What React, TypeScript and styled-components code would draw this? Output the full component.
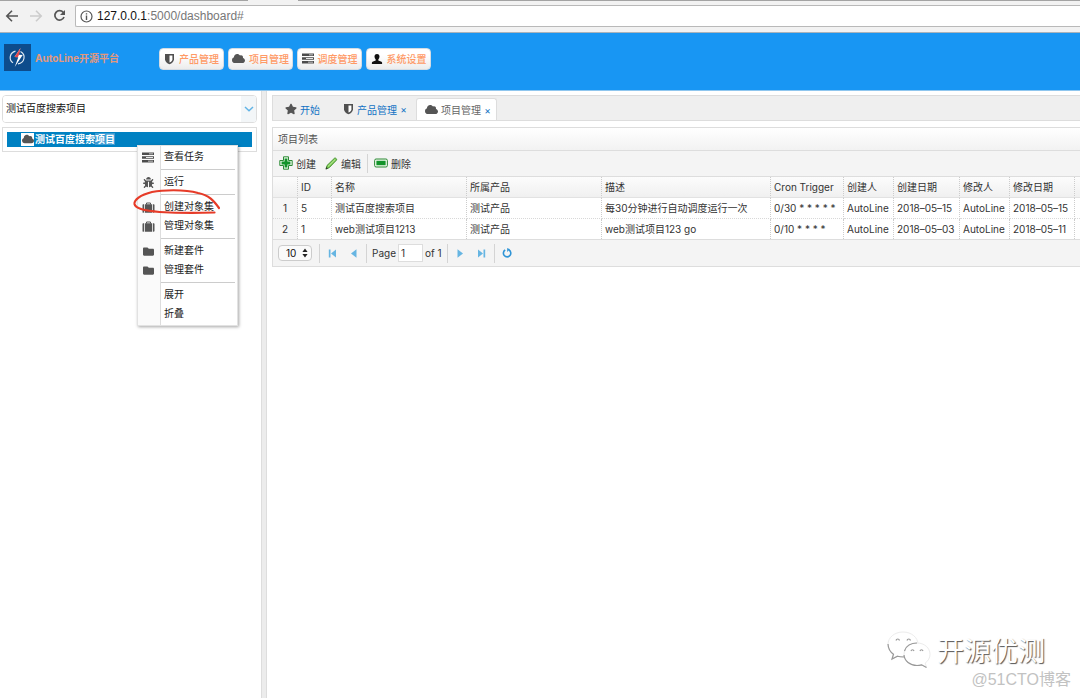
import React from 'react';
import styled, { createGlobalStyle, css } from 'styled-components';
import { FaCloud, FaStar, FaBug, FaFolder } from 'react-icons/fa';

const Global = createGlobalStyle`
  * { box-sizing: border-box; }
  body { margin: 0; background: #fff; }
  body, button, input, select {
    font-family: Inter, "Noto Sans CJK SC", sans-serif;
    font-size: 10px;
    color: #333;
  }
  button { margin: 0; padding: 0; border: 0; background: none; cursor: pointer; }
`;

const Page = styled.div`
  display: flex;
  flex-direction: column;
  min-height: 100vh;
  position: relative;
  overflow: hidden;
`;

/* ---------- browser bar ---------- */
const BrowserBar = styled.div`
  display: flex;
  align-items: center;
  height: 33px;
  flex: none;
  background: #f2f2f2;
  border-bottom: 1px solid #a9b3bb;
  position: relative;
  &::before {
    content: '';
    position: absolute;
    top: 0;
    left: 0;
    width: 248px;
    height: 1px;
    background: #a3a3a3;
  }
  &::after {
    content: '';
    position: absolute;
    top: 0;
    left: 298px;
    right: 0;
    height: 1px;
    background: #a3a3a3;
  }
`;
const NavButtons = styled.div`
  display: flex;
  gap: 8px;
  width: 75px;
  padding-left: 4px;
  flex: none;
  button { display: flex; }
`;
const Address = styled.div`
  display: flex;
  align-items: center;
  gap: 4px;
  flex: 1;
  height: 22px;
  padding-left: 4px;
  background: #fff;
  border: 1px solid #b9b9b9;
  border-right: 0;
  border-radius: 2px 0 0 2px;
  font-family: "Liberation Sans", sans-serif;
  font-size: 12px;
  color: #777;
  b { font-weight: 400; color: #111; }
`;

/* ---------- header ---------- */
const Header = styled.header`
  display: flex;
  align-items: center;
  height: 58px;
  flex: none;
  padding: 0 4px 8px;
  background: #1896f3;
  border-bottom: 1px solid #8fc6ee;
`;
const Brand = styled.div`
  display: flex;
  align-items: center;
  gap: 4px;
  width: 155px;
  flex: none;
  font-weight: 700;
  color: #e3987c;
`;
const Nav = styled.nav`
  display: flex;
  gap: 4px;
  padding-top: 2px;
`;
const NavButton = styled.button`
  display: flex;
  align-items: center;
  justify-content: center;
  gap: 4px;
  width: 65px;
  height: 22px;
  color: #ff9a66;
  font-weight: 500;
  border: 1px solid #d4dce4;
  border-radius: 4px;
  background: linear-gradient(#fff 30%, #ececec);
  white-space: nowrap;
`;

/* ---------- body ---------- */
const Body = styled.div`
  display: flex;
  flex: 1;
`;
const Side = styled.aside`
  display: flex;
  flex-direction: column;
  gap: 4px;
  width: 262px;
  flex: none;
  padding: 4px 4px 0 2px;
  border-right: 1px solid #ddd;
`;
const Splitter = styled.div`
  width: 5px;
  flex: none;
  background: #ececec;
  border-right: 1px solid #ddd;
`;
const Combo = styled.div`
  display: flex;
  position: relative;
  height: 28px;
  border: 1px solid #ddd;
  border-radius: 4px;
  overflow: hidden;
  select {
    appearance: none;
    flex: 1;
    padding: 0 20px 2px 3px;
    border: 0;
    background: #fff;
    color: #111;
  }
`;
const ComboArrow = styled.span`
  position: absolute;
  right: 0;
  top: 0;
  bottom: 0;
  width: 15px;
  display: flex;
  align-items: center;
  justify-content: center;
  background: #f3f6f8;
  pointer-events: none;
`;
const Tree = styled.div`
  padding: 4px;
  border: 1px solid #ddd;
`;
const TreeNode = styled.button`
  display: flex;
  align-items: center;
  gap: 1px;
  width: 100%;
  height: 15px;
  padding: 0 0 1px 14px;
  background: #0081c2;
  color: #fff;
  font-weight: 700;
  line-height: 13px;
  text-align: left;
  mark { background: #3d9bd3; color: #fff; }
`;
const IconTile = styled.span`
  display: flex;
  align-items: center;
  justify-content: center;
  width: 13px;
  height: 13px;
  background: #fff;
  color: #555;
`;

const Main = styled.main`
  flex: 1;
  min-width: 0;
  padding: 4px 0 0 5px;
`;
const Tabs = styled.div`
  display: flex;
  align-items: flex-end;
  height: 26px;
  padding-left: 4px;
  background: #efefef;
  border: 1px solid #ddd;
  border-right: 0;
`;
const Tab = styled.div<{ $active?: boolean }>`
  display: flex;
  align-items: center;
  gap: 3px;
  height: 22px;
  padding: 0 9px 0 8px;
  color: #555;
  button { color: #1272c4; }
  button + button { width: 7px; }
  & + & { padding-left: 14px; }
  ${p => p.$active && css`
    && {
      padding: 0 5px 0 8px;
      background: #fff;
      border: 1px solid #ddd;
      border-bottom: 0;
      border-radius: 3px 3px 0 0;
    }
    button:first-of-type { color: #666; }
  `}
`;
const Panel = styled.section`
  margin-top: 6px;
  border: 1px solid #ddd;
  border-right: 0;
  background: #f4f4f4;
  overflow: hidden;
`;
const PanelTitle = styled.h2`
  margin: 0;
  height: 23px;
  padding: 0 5px;
  font-size: 10px;
  font-weight: 400;
  line-height: 22px;
  color: #555;
  background: linear-gradient(#fff, #f2f2f2);
  border-bottom: 1px solid #ddd;
`;
const Bar = styled.div`
  display: flex;
  align-items: center;
  height: 25px;
  padding: 0 6px;
`;
const Tools = styled(Bar)`
  gap: 6px;
`;
const ToolButton = styled.button`
  display: flex;
  align-items: center;
  gap: 3px;
  height: 20px;
  padding-bottom: 1px;
  & + & { margin-left: 3px; }
`;
const Divider = styled.i`
  width: 1px;
  height: 19px;
  background: #d4d4d4;
`;

const Grid = styled.table`
  width: 100%;
  table-layout: fixed;
  border-collapse: separate;
  border-spacing: 0;
  border-top: 1px solid #ddd;
  border-bottom: 1px solid #ddd;
  background: #fff;
  th, td {
    height: 21px;
    padding: 0 0 0 3px;
    border-right: 1px dotted #ccc;
    border-bottom: 1px dotted #d8d8d8;
    font-weight: 400;
    text-align: left;
    white-space: nowrap;
    line-height: 20px;
  }
  thead th {
    background: linear-gradient(#fcfcfc, #f0f0f0);
    border-bottom: 1px solid #e2e2e2;
  }
  tbody th { background: #f6f6f6; text-align: center; padding: 0; }
  tbody tr:last-child > * { height: 20px; border-bottom: 0; }
  th:last-child, td:last-child { border-right: 0; }
`;
const Col = styled.col<{ $w?: number }>`
  width: ${p => (p.$w ? `${p.$w}px` : 'auto')};
`;

const Pager = styled(Bar)`
  height: 26px;
  gap: 5px;
  padding-left: 5px;
  button { display: flex; justify-content: center; width: 14px; }
  button + button { margin-left: 3px; }
  label { display: flex; align-items: center; gap: 2px; }
  input {
    width: 25px;
    height: 18px;
    padding: 0 2px;
    border: 1px solid #ddd;
    background: #fff;
  }
`;
const SizeSelect = styled.span`
  position: relative;
  display: flex;
  align-items: center;
  margin-right: 2px;
  select {
    appearance: none;
    width: 34px;
    height: 16px;
    padding: 0 0 0 7px;
    border: 1px solid #ccc;
    border-radius: 4px;
    background: #fafafa;
    color: #111;
  }
  svg { position: absolute; right: 4px; pointer-events: none; }
`;

/* ---------- context menu ---------- */
const Menu = styled.div`
  position: absolute;
  left: 137px;
  top: 145px;
  width: 101px;
  padding: 1px 2px 2px;
  background: linear-gradient(90deg, #fafafa 22px, #ddd 22px, #ddd 23px, #fff 23px);
  border: 1px solid #e2e2e2;
  box-shadow: 1px 1px 3px rgba(0, 0, 0, 0.35);
`;
const MenuItem = styled.button`
  display: flex;
  align-items: center;
  gap: 9px;
  width: 100%;
  height: 19px;
  padding: 0 0 2px 1px;
  color: #222;
  svg { color: #555; }
`;
const MenuIcon = styled.span`
  display: flex;
  justify-content: center;
  width: 14px;
  padding-top: 3px;
`;
const MenuLine = styled.hr`
  margin: 3px 0 2px 21px;
  border: 0;
  border-top: 1px solid #ccc;
`;
const Scribble = styled.svg`
  position: absolute;
  left: 132px;
  top: 186px;
  pointer-events: none;
`;

/* ---------- watermark ---------- */
const Watermark = styled.div`
  position: absolute;
  right: 9px;
  bottom: 8px;
  display: flex;
  flex-direction: column;
  align-items: flex-end;
`;
const WatermarkName = styled.div`
  display: flex;
  align-items: center;
  gap: 5px;
  margin-right: 26px;
  font-family: "Noto Sans CJK SC", sans-serif;
  font-size: 27px;
  line-height: 40px;
  color: #fff;
  text-shadow: 1px 1px 1px #555;
`;
const WatermarkSite = styled.div`
  font-family: "Liberation Sans", "Noto Sans CJK SC", sans-serif;
  font-size: 16px;
  line-height: 20px;
  color: #c2c2c2;
`;

/* ---------- icons ---------- */
const Shield = () => (
  <svg width="11" height="12" viewBox="0 0 11 12" aria-hidden="true">
    <path d="M1 1h9v5.200c0 2.300-2 4-4.500 5.100C3 10.200 1 8.500 1 6.200z" fill="#505050" />
    <path d="M5.500 2.500h2.900v3.700c0 1.500-1.200 2.500-2.900 3.400z" fill="#fff" />
  </svg>
);
const TasksIcon = () => (
  <svg width="12" height="11" viewBox="0 0 12 11" aria-hidden="true">
    <path d="M0 .5h12v2.600H0zM0 4.200h12v2.600H0zM0 7.900h12v2.600H0z" fill="#4c4c4c" />
    <path d="M7 1.400h4v.8H7zM4 5.100h7v.8H4zM6 8.800h5v.8H6z" fill="#e8e8e8" />
  </svg>
);
const UserIcon = () => (
  <svg width="12" height="12" viewBox="0 0 12 12" aria-hidden="true">
    <path d="M6 1c1.700 0 2.600 1.200 2.500 2.800C8.400 5 8 5.900 7.300 6.500v.9L10.500 8.800c.4.2.6.6.6 1V11H.9V9.800c0-.4.2-.8.6-1L4.700 7.400v-.9C4 5.900 3.600 5 3.500 3.800 3.400 2.200 4.300 1 6 1z" fill="#111" />
  </svg>
);
const CaseIcon = () => (
  <svg width="13" height="11" viewBox="0 0 13 11" aria-hidden="true">
    <path d="M4.500 2.500V1h4v1.500" fill="none" stroke="#555" />
    <path d="M3 2.200h7v8.500H3zM1.500 2.200h.7v8.500h-.7C.8 10.700.5 10.300.5 9.800V3.100c0-.5.3-.9 1-.9zM10.800 2.200h.7c.7 0 1 .4 1 .9v6.700c0 .5-.3.900-1 .9h-.7z" fill="#555" />
  </svg>
);
const AddIcon = () => (
  <svg width="14" height="14" viewBox="0 0 14 14" aria-hidden="true">
    <path d="M4.500 .8h5v3.700h3.700v5H9.500v3.700h-5V9.500H.8v-5h3.700z" fill="#eaf7e8" stroke="#2c8a35" strokeLinejoin="round" />
    <path d="M5.600 2.600h2.800v3h3v2.800h-3v3H5.600v-3h-3V5.600h3z" fill="#12932a" />
  </svg>
);
const PencilIcon = () => (
  <svg width="13" height="13" viewBox="0 0 13 13" aria-hidden="true">
    <path d="M1 12l1-3.500L9.500 1.200c.8-.8 2.800 1 2 1.900L4.200 10.700z" fill="#7ccb4e" stroke="#3c8a2b" strokeWidth=".9" />
    <path d="M3 9.500L10.300 2.300" stroke="#c9efb0" strokeWidth=".9" />
    <path d="M.6 12.400l.8-2.300 1.500 1.500z" fill="#333" />
  </svg>
);
const RemoveIcon = () => (
  <svg width="14" height="10" viewBox="0 0 14 10" aria-hidden="true">
    <rect x=".6" y="1" width="12.800" height="8" rx="1.500" fill="#eaf7e8" stroke="#2c8a35" />
    <rect x="2.400" y="2.800" width="9.200" height="4.400" fill="#12932a" />
  </svg>
);
const Arrow = ({ flip, bar }: { flip?: boolean; bar?: boolean }) => (
  <svg width="8" height="9" viewBox="0 0 8 9" aria-hidden="true">
    <g transform={flip ? 'translate(8 0) scale(-1 1)' : undefined} fill="#66b5e2">
      <path d={bar ? 'M0 .5L5 4.500 0 8.500z' : 'M1.500 .2L7 4.500l-5.500 4.300z'} />
      {bar && <path d="M5.500 .5h1.700v8H5.500z" />}
    </g>
  </svg>
);
const Logo = () => (
  <svg width="27" height="27" viewBox="0 0 27 27" role="img" aria-label="AutoLine">
    <rect width="27" height="27" fill="#0d4c8c" />
    <path d="M11.500 7.200A7.200 6.600 0 0 0 9 18.800M16.500 7.500a7 6.600 0 0 1-2.500 12.300" fill="none" stroke="#dfe9f2" strokeWidth="1.200" />
    <path d="M16.500 4l-6 9 3.800.2-3.600 9.800 8-12-4-.2z" fill="#fff" />
    <path d="M16.500 4l-6 9 3.300.2 1.200-2.400z" fill="#e5484b" />
  </svg>
);

const columns = [
  ['', 25], ['ID', 34], ['名称', 135], ['所属产品', 135], ['描述', 169], ['Cron Trigger', 73],
  ['创建人', 50], ['创建日期', 66], ['修改人', 50], ['修改日期', 65],
] as [string, number][];
const rows = [
  ['5', '测试百度搜索项目', '测试产品', '每30分钟进行自动调度运行一次', '0/30 * * * * *', 'AutoLine', '2018–05–15', 'AutoLine', '2018–05–15'],
  ['1', 'web测试项目1213', '测试产品', 'web测试项目123 go', '0/10 * * * *', 'AutoLine', '2018–05–03', 'AutoLine', '2018–05–11'],
];

const Item = ({ icon, children }: { icon?: React.ReactNode; children: React.ReactNode }) => (
  <MenuItem role="menuitem"><MenuIcon>{icon}</MenuIcon>{children}</MenuItem>
);

export default function App() {
  return (
    <Page>
      <Global />
      <BrowserBar>
        <NavButtons>
          <button aria-label="Back">
            <svg width="16" height="16" viewBox="0 0 16 16"><path d="M14 8H3M8 2.800L2.800 8 8 13.200" fill="none" stroke="#555" strokeWidth="1.600" /></svg>
          </button>
          <button aria-label="Forward">
            <svg width="16" height="16" viewBox="0 0 16 16"><path d="M2 8h11M8 2.800L13.200 8 8 13.200" fill="none" stroke="#ccc" strokeWidth="1.600" /></svg>
          </button>
          <button aria-label="Reload">
            <svg width="16" height="16" viewBox="0 0 16 16"><path d="M11.200 4.400A4.700 4.700 0 1 0 12 9" fill="none" stroke="#555" strokeWidth="1.700" /><path d="M13 2v5H8z" fill="#555" /></svg>
          </button>
        </NavButtons>
        <Address>
          <svg width="13" height="13" viewBox="0 0 13 13" aria-hidden="true">
            <circle cx="6.500" cy="6.500" r="5.500" fill="none" stroke="#555" strokeWidth="1.200" />
            <path d="M5.800 5.600h1.400V10H5.800zM5.800 3.200h1.400v1.400H5.800z" fill="#555" />
          </svg>
          <span><b>127.0.0.1</b>:5000/dashboard#</span>
        </Address>
      </BrowserBar>

      <Header>
        <Brand><Logo />AutoLine开源平台</Brand>
        <Nav>
          <NavButton><Shield />产品管理</NavButton>
          <NavButton><FaCloud size={13} color="#555" />项目管理</NavButton>
          <NavButton><TasksIcon />调度管理</NavButton>
          <NavButton><UserIcon />系统设置</NavButton>
        </Nav>
      </Header>

      <Body>
        <Side>
          <Combo>
            <select aria-label="项目"><option>测试百度搜索项目</option></select>
            <ComboArrow>
              <svg width="10" height="6" viewBox="0 0 10 6"><path d="M1 1l4 3.800L9 1" fill="none" stroke="#62b4e6" strokeWidth="1.500" /></svg>
            </ComboArrow>
          </Combo>
          <Tree>
            <TreeNode>
              <IconTile><FaCloud size={12} /></IconTile>
              <span>测试百度搜索<mark>项目</mark></span>
            </TreeNode>
          </Tree>
        </Side>
        <Splitter />
        <Main>
          <Tabs>
            <Tab><FaStar size={12} /><button>开始</button></Tab>
            <Tab><Shield /><button>产品管理</button><button aria-label="关闭产品管理">×</button></Tab>
            <Tab $active><FaCloud size={13} /><button>项目管理</button><button aria-label="关闭项目管理">×</button></Tab>
          </Tabs>
          <Panel>
            <PanelTitle>项目列表</PanelTitle>
            <Tools>
              <ToolButton><AddIcon />创建</ToolButton>
              <ToolButton><PencilIcon />编辑</ToolButton>
              <Divider />
              <ToolButton><RemoveIcon />删除</ToolButton>
            </Tools>
            <Grid>
              <colgroup>
                {columns.map(([name, w]) => <Col key={name} $w={w} />)}
                <Col />
              </colgroup>
              <thead>
                <tr>{columns.map(([name]) => <th key={name} scope="col">{name}</th>)}<th /></tr>
              </thead>
              <tbody>
                {rows.map((row, i) => (
                  <tr key={i}>
                    <th scope="row">{i + 1}</th>
                    {row.map((cell, j) => <td key={j}>{cell}</td>)}
                    <td />
                  </tr>
                ))}
              </tbody>
            </Grid>
            <Pager>
              <SizeSelect>
                <select aria-label="Rows per page"><option>10</option></select>
                <svg width="6" height="10" viewBox="0 0 6 10"><path d="M3 .5l2.600 3.500H.4zM3 9.500L.4 6h5.200z" fill="#222" /></svg>
              </SizeSelect>
              <Divider />
              <button aria-label="First"><Arrow flip bar /></button>
              <button aria-label="Previous"><Arrow flip /></button>
              <Divider />
              <label>Page <input defaultValue="1" /> of 1</label>
              <Divider />
              <button aria-label="Next"><Arrow /></button>
              <button aria-label="Last"><Arrow bar /></button>
              <Divider />
              <button aria-label="Refresh">
                <svg width="10" height="10" viewBox="0 0 10 10"><path d="M3.200 2A3.700 3.700 0 1 0 7 2" fill="none" stroke="#2f94d6" strokeWidth="1.600" /><path d="M5.200 0v4L8 1.200z" fill="#2f94d6" /></svg>
              </button>
            </Pager>
          </Panel>
        </Main>
      </Body>

      <Menu role="menu">
        <Item icon={<TasksIcon />}>查看任务</Item>
        <MenuLine />
        <Item icon={<FaBug size={11} />}>运行</Item>
        <MenuLine />
        <Item icon={<CaseIcon />}>创建对象集</Item>
        <Item icon={<CaseIcon />}>管理对象集</Item>
        <MenuLine />
        <Item icon={<FaFolder size={11} />}>新建套件</Item>
        <Item icon={<FaFolder size={11} />}>管理套件</Item>
        <MenuLine />
        <Item>展开</Item>
        <Item>折叠</Item>
      </Menu>
      <Scribble width="92" height="30" viewBox="0 0 92 30" aria-hidden="true">
        <path d="M87 22C82 15 77 9 66 7 52 3 30 4 20 6 8 9 2 14 2.500 18c1 5 12 7 25 8 18 1 38 1 55 .5" fill="none" stroke="#e63b28" strokeWidth="2.200" strokeLinecap="round" />
      </Scribble>

      <Watermark>
        <WatermarkName>
          <svg width="46" height="40" viewBox="0 0 46 40" aria-hidden="true">
            <g fill="#fff" stroke="#ececec" strokeWidth="1">
              <path d="M17 2C8.500 2 2 7.500 2 14.500c0 4 2.200 7.500 5.500 9.800L6 29l5.500-2.800c1.800.5 3.500.8 5.500.8 8.500 0 15-5.500 15-12.500S25.500 2 17 2z" />
              <path d="M31 13c-7.500 0-13 5-13 11.300S23.500 35.500 31 35.500c1.600 0 3.200-.3 4.600-.7L40.500 37.500 39.200 33c3-2 4.800-5.200 4.800-8.700C44 18 38.500 13 31 13z" />
            </g>
            <g fill="none" stroke="#999" strokeWidth="1.200">
              <path d="M2 14c.2 4.500 2.200 8 5.500 10.300L6 29l5.500-2.800c2 .6 4 .8 6.500.8M18.500 21C20 16 25 13 31 13M18 25c.5 6 6 10.500 13 10.500 1.600 0 3.200-.3 4.600-.7l4.900 2.700" />
              <path d="M10 10.500c.5-2 3-2 3.500 0M21 10.500c.5-2 3-2 3.500 0M25 21c.5-1.700 2.500-1.700 3 0M34 21c.5-1.700 2.500-1.700 3 0" />
            </g>
          </svg>
          开源优测
        </WatermarkName>
        <WatermarkSite>@51CTO博客</WatermarkSite>
      </Watermark>
    </Page>
  );
}
